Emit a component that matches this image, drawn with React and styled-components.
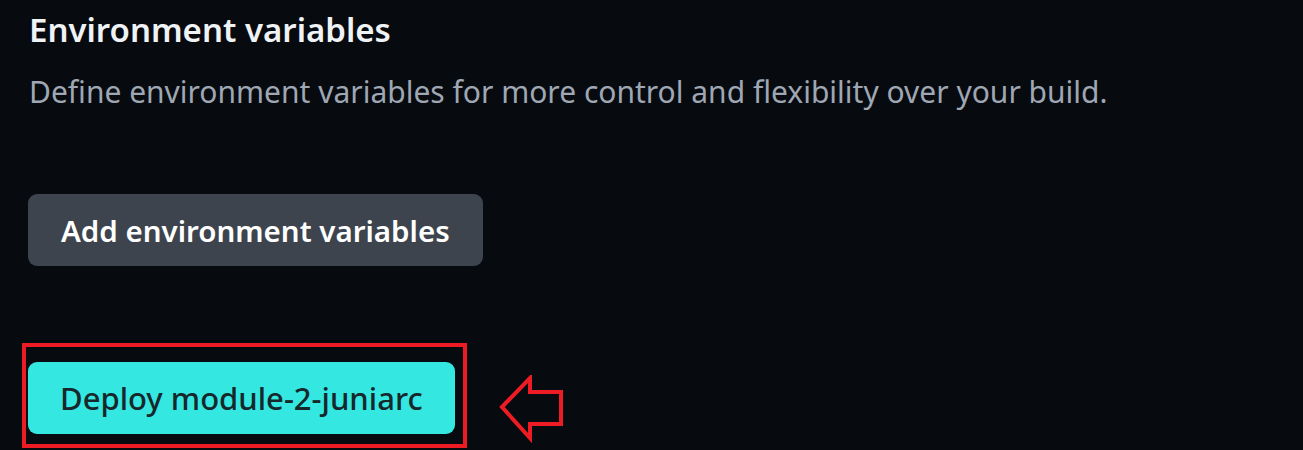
import React from "react";
import styled, { createGlobalStyle } from "styled-components";

const GlobalStyle = createGlobalStyle`
  html, body {
    margin: 0;
    background: #070a0f;
  }
  body {
    font-family: "Noto Sans", "Open Sans", sans-serif;
    -webkit-font-smoothing: antialiased;
  }
`;

const Page = styled.main`
  display: flex;
  flex-direction: column;
  align-items: flex-start;
  padding: 8px 0 0 29px;
  height: 450px;
  box-sizing: border-box;
  overflow: hidden;
`;

const Title = styled.h2`
  margin: 0;
  font-size: 33px;
  line-height: 44px;
  font-weight: 600;
  color: #f0f3f6;
`;

const Description = styled.p`
  margin: 22px 0 0;
  font-size: 30px;
  line-height: 36px;
  font-weight: 400;
  color: #9ea7b3;
`;

const Button = styled.button`
  display: inline-flex;
  align-items: center;
  justify-content: center;
  height: 72px;
  padding: 0 ${(p) => (p.$primary ? 32 : 33)}px;
  border: none;
  border-radius: 9px;
  font-family: inherit;
  cursor: pointer;
  background: ${(p) => (p.$primary ? "#34e7e1" : "#3d444d")};
  color: ${(p) => (p.$primary ? "#16282b" : "#ffffff")};
  font-size: ${(p) => (p.$primary ? 31 : 29.5)}px;
  font-weight: ${(p) => (p.$primary ? 500 : 600)};
`;

const AddButton = styled(Button)`
  margin: 84px 0 0 -1px;
`;

const DeployRow = styled.div`
  display: flex;
  align-items: center;
  gap: 32px;
  margin: 77px 0 0 -7px;
`;

const Highlight = styled.div`
  border: 4px solid #ed1c24;
  padding: 15px 8px 10px 2px;
`;

const Arrow = () => (
  <svg width="68" height="68" viewBox="0 0 68 68" style={{ marginTop: 26 }}>
    <polygon
      points="3,32 31,3 31,17 62,17 62,49 31,49 31,63"
      fill="none"
      stroke="#ed1c24"
      strokeWidth="4"
      strokeLinejoin="miter"
    />
  </svg>
);

export default function App() {
  return (
    <>
      <GlobalStyle />
      <Page>
        <Title>Environment variables</Title>
        <Description>
          Define environment variables for more control and flexibility over
          your build.
        </Description>
        <AddButton>Add environment variables</AddButton>
        <DeployRow>
          <Highlight>
            <Button $primary>Deploy module-2-juniarc</Button>
          </Highlight>
          <Arrow />
        </DeployRow>
      </Page>
    </>
  );
}
